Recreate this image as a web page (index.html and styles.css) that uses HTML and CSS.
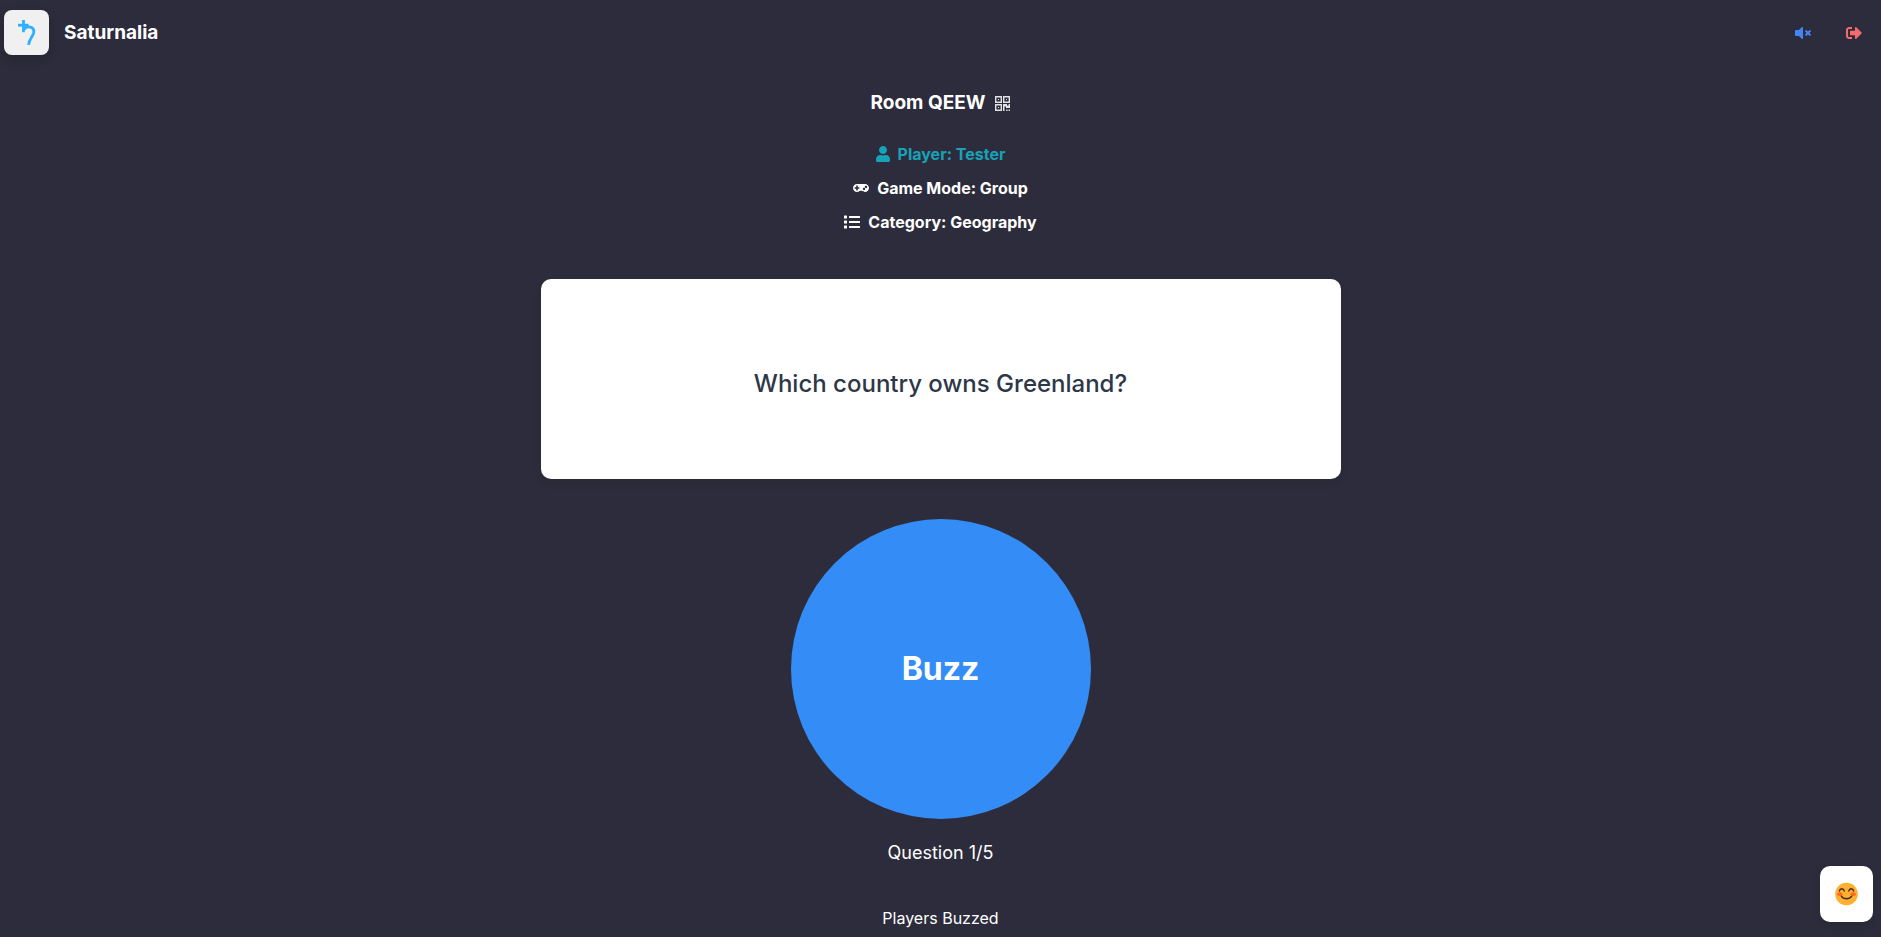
FILE: index.html
```html
<!DOCTYPE html>
<html lang="en">
<head>
<meta charset="utf-8">
<meta name="viewport" content="width=device-width, initial-scale=1">
<title>Saturnalia</title>
<link rel="stylesheet" href="styles.css">
</head>
<body>
<header class="topbar">
  <a class="brand" href="#">
    <span class="brand-logo">
      <svg viewBox="0 0 45 45" width="45" height="45" fill="none" stroke="#2fb0fb" stroke-width="2.8" aria-hidden="true">
        <path d="M14 15.2h10.6"/>
        <path d="M19.5 10v12.2"/>
        <path d="M20 19.6c1.200-2 3.200-3 5.400-2.700 3 .4 4.700 2.600 4.400 5.500-.3 3.400-4.800 6.200-5.200 12.400"/>
      </svg>
    </span>
    <span class="brand-name">Saturnalia</span>
  </a>
  <nav class="actions" aria-label="Room controls">
    <button class="icon-button mute" type="button" aria-label="Unmute">
      <svg viewBox="0 0 512 512" width="16" height="16" fill="currentColor" aria-hidden="true"><path d="M215.03 71.05L126.06 160H24c-13.26 0-24 10.74-24 24v144c0 13.25 10.74 24 24 24h102.06l88.97 88.95c15.03 15.03 40.97 4.47 40.97-16.97V88.02c0-21.46-25.96-31.98-40.97-16.97zM461.64 256l45.64-45.64c6.3-6.3 6.3-16.52 0-22.82l-22.82-22.82c-6.3-6.3-16.52-6.3-22.82 0L416 210.36l-45.64-45.64c-6.3-6.3-16.52-6.3-22.82 0l-22.82 22.82c-6.3 6.3-6.3 16.52 0 22.82L370.36 256l-45.63 45.63c-6.3 6.3-6.3 16.52 0 22.82l22.82 22.82c6.3 6.3 16.52 6.3 22.82 0L416 301.64l45.64 45.64c6.3 6.3 16.52 6.3 22.82 0l22.82-22.82c6.3-6.3 6.3-16.52 0-22.82L461.64 256z"/></svg>
    </button>
    <button class="icon-button leave" type="button" aria-label="Leave room">
      <svg viewBox="0 0 512 512" width="16" height="16" fill="currentColor" aria-hidden="true"><path d="M497 273L329 441c-15 15-41 4.500-41-17v-96H152c-13.300 0-24-10.700-24-24v-96c0-13.300 10.700-24 24-24h136V88c0-21.400 25.900-32 41-17l168 168c9.300 9.400 9.300 24.600 0 34zM192 436v-40c0-6.600-5.400-12-12-12H96c-17.700 0-32-14.300-32-32V160c0-17.700 14.300-32 32-32h84c6.600 0 12-5.400 12-12V76c0-6.600-5.400-12-12-12H96c-53 0-96 43-96 96v192c0 53 43 96 96 96h84c6.600 0 12-5.400 12-12z"/></svg>
    </button>
  </nav>
</header>

<main class="room">
  <div class="room-title">
    <h1>Room QEEW</h1>
    <button class="qr-button" type="button" aria-label="Show QR code">
      <svg viewBox="0 0 15 15" width="15" height="15" fill="currentColor" aria-hidden="true"><path d="M0 0h7v7H0zM1.400 1.400v4.200h4.200V1.400zM3 3h1v1H3zM8 0h7v7H8zM9.400 1.400v4.200h4.200V1.400zM11 3h1v1h-1zM0 8h7v7H0zM1.400 9.400v4.200h4.200V9.400zM3 11h1v1H3zM8 8h4v1.400h1.600V8H15v4h-4v-1.500H9.500V15H8zM11.200 13.400h1.400V15h-1.400zM13.600 13.400H15V15h-1.400z" fill-rule="evenodd"/></svg>
    </button>
  </div>

  <ul class="details">
    <li class="detail player">
      <svg viewBox="0 0 448 512" width="14" height="16" fill="currentColor" aria-hidden="true"><path d="M224 256c70.700 0 128-57.300 128-128S294.700 0 224 0 96 57.300 96 128s57.300 128 128 128zm89.600 32h-16.700c-22.200 10.200-46.900 16-72.900 16s-50.600-5.800-72.900-16h-16.700C60.200 288 0 348.200 0 422.400V464c0 26.500 21.500 48 48 48h352c26.500 0 48-21.500 48-48v-41.600c0-74.200-60.200-134.400-134.400-134.400z"/></svg>
      <span>Player: Tester</span>
    </li>
    <li class="detail">
      <svg viewBox="0 0 640 512" width="16" height="16" fill="currentColor" aria-hidden="true"><path d="M480 96H160C71.600 96 0 167.600 0 256s71.600 160 160 160c44.800 0 85.200-18.400 114.200-48h91.500c29 29.600 69.500 48 114.200 48 88.400 0 160-71.600 160-160S568.400 96 480 96zM256 276c0 6.600-5.400 12-12 12h-52v52c0 6.600-5.400 12-12 12h-40c-6.600 0-12-5.400-12-12v-52H76c-6.600 0-12-5.400-12-12v-40c0-6.600 5.400-12 12-12h52v-52c0-6.600 5.400-12 12-12h40c6.600 0 12 5.400 12 12v52h52c6.600 0 12 5.400 12 12v40zm184 68c-26.500 0-48-21.500-48-48s21.500-48 48-48 48 21.500 48 48-21.500 48-48 48zm80-80c-26.500 0-48-21.500-48-48s21.500-48 48-48 48 21.500 48 48-21.500 48-48 48z"/></svg>
      <span>Game Mode: Group</span>
    </li>
    <li class="detail">
      <svg viewBox="0 0 512 512" width="16" height="16" fill="currentColor" aria-hidden="true"><path d="M80 368H16a16 16 0 0 0-16 16v64a16 16 0 0 0 16 16h64a16 16 0 0 0 16-16v-64a16 16 0 0 0-16-16zm0-320H16A16 16 0 0 0 0 64v64a16 16 0 0 0 16 16h64a16 16 0 0 0 16-16V64a16 16 0 0 0-16-16zm0 160H16a16 16 0 0 0-16 16v64a16 16 0 0 0 16 16h64a16 16 0 0 0 16-16v-64a16 16 0 0 0-16-16zm416 176H176a16 16 0 0 0-16 16v32a16 16 0 0 0 16 16h320a16 16 0 0 0 16-16v-32a16 16 0 0 0-16-16zm0-320H176a16 16 0 0 0-16 16v32a16 16 0 0 0 16 16h320a16 16 0 0 0 16-16V80a16 16 0 0 0-16-16zm0 160H176a16 16 0 0 0-16 16v32a16 16 0 0 0 16 16h320a16 16 0 0 0 16-16v-32a16 16 0 0 0-16-16z"/></svg>
      <span>Category: Geography</span>
    </li>
  </ul>

  <section class="question-card">
    <p>Which country owns Greenland?</p>
  </section>

  <button class="buzz" type="button">Buzz</button>

  <p class="progress">Question 1/5</p>
  <h2 class="buzzed-title">Players Buzzed</h2>
</main>

<button class="reactions" type="button" aria-label="Reactions">
  <svg viewBox="0 0 24 24" width="23" height="24" fill="none" aria-hidden="true">
    <circle cx="12" cy="12" r="11.800" fill="#ffb02e"/>
    <ellipse cx="5" cy="12.200" rx="2.700" ry="1.900" fill="#ff6723"/>
    <ellipse cx="19" cy="12.200" rx="2.700" ry="1.900" fill="#ff6723"/>
    <path d="M4.600 8.800c.7-3 4.300-3 5 0M14.400 8.800c.7-3 4.300-3 5 0M6.600 14.300c2.300 3.500 8.500 3.500 10.800 0" stroke="#402a32" stroke-width="1.500" stroke-linecap="round"/>
  </svg>
</button>
</body>
</html>
```
FILE: styles.css
```css
* {
  box-sizing: border-box;
}

body {
  margin: 0;
  min-height: 100vh;
  background: #2d2c3c;
  color: #fff;
  font: 400 16px/24px Inter, sans-serif;
}

h1,
h2,
p,
ul {
  margin: 0;
  padding: 0;
}

button {
  border: 0;
  padding: 0;
  background: none;
  color: inherit;
  font: inherit;
  cursor: pointer;
}

svg {
  display: block;
  flex: none;
}

.topbar {
  display: flex;
  justify-content: space-between;
  align-items: center;
  padding: 10px 7px 10px 4px;
}

.brand {
  display: flex;
  align-items: center;
  gap: 15px;
  color: inherit;
  text-decoration: none;
}

.brand-logo {
  border-radius: 8px;
  background: #f0f0f0;
  box-shadow: 0 4px 12px rgba(0, 0, 0, 0.2);
}

.brand-name {
  font-size: 19px;
  font-weight: 700;
}

.actions {
  display: flex;
  gap: 11px;
}

.icon-button {
  display: grid;
  place-items: center;
  width: 40px;
  height: 40px;
}

.mute {
  color: #4285f4;
}

.leave {
  color: #f56b6b;
}

.room {
  display: flex;
  flex-direction: column;
  align-items: center;
  padding: 26px 16px 0;
}

.room-title {
  display: flex;
  align-items: center;
  gap: 10px;
}

.room-title h1 {
  font-size: 19px;
  font-weight: 700;
  line-height: 24px;
}

.qr-button {
  color: #e2e2e6;
}

.details {
  display: grid;
  justify-items: center;
  gap: 10px;
  margin-top: 27px;
  list-style: none;
}

.detail {
  display: flex;
  align-items: center;
  gap: 8px;
  font-weight: 700;
}

.player {
  color: #17a2b8;
}

.question-card {
  display: grid;
  place-items: center;
  width: 100%;
  max-width: 800px;
  min-height: 200px;
  margin-top: 45px;
  padding: 30px 20px 20px;
  border-radius: 10px;
  background: #fff;
  box-shadow: 0 4px 8px rgba(0, 0, 0, 0.1);
  color: #2d3748;
  text-align: center;
}

.question-card p {
  font-size: 24px;
  font-weight: 500;
  line-height: 36px;
}

.buzz {
  width: 300px;
  height: 300px;
  margin-top: 40px;
  border-radius: 50%;
  background: #348cf6;
  font-size: 32px;
  font-weight: 700;
}

.progress {
  margin-top: 20px;
  font-size: 18px;
  line-height: 28px;
}

.buzzed-title {
  margin-top: 39px;
  font-size: 16px;
  font-weight: 400;
}

.reactions {
  position: fixed;
  right: 8px;
  bottom: 15px;
  padding: 16px 15px;
  border-radius: 10px;
  background: #fff;
  box-shadow: 0 4px 8px rgba(0, 0, 0, 0.1);
}
```
